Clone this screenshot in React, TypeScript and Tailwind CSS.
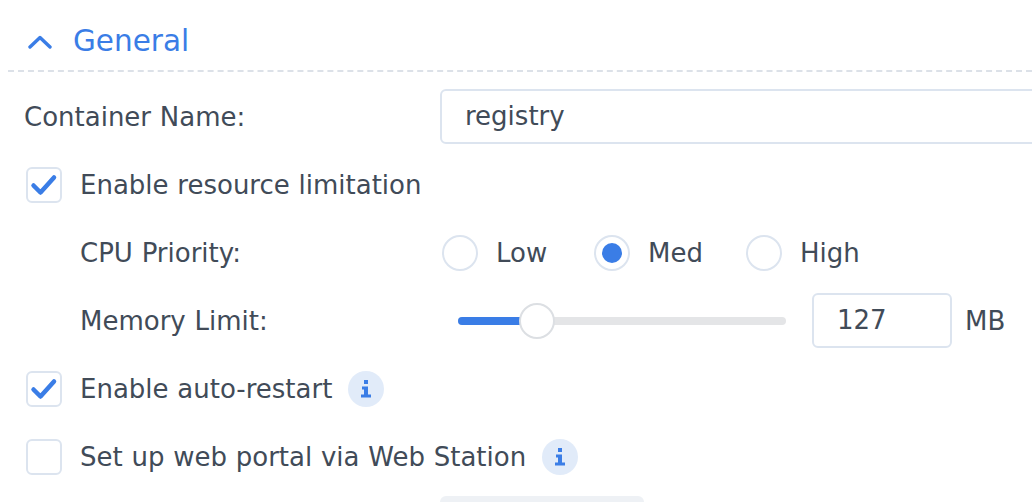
const font = "[font-family:'DejaVu_Sans',sans-serif]";

function Check({ on }: { on?: boolean }) {
  return (
    <span className="flex h-9 w-9 shrink-0 items-center justify-center rounded-md border-2 border-[#dce4ef] bg-white">
      {on && (
        <svg width="28" height="24" viewBox="0 0 28 24" fill="none">
          <path d="M3.5 12.5 L10.5 19.5 L24 4.5" stroke="#3a7de6" strokeWidth="4.5" strokeLinecap="round" strokeLinejoin="round" />
        </svg>
      )}
    </span>
  );
}

function Radio({ label, on }: { label: string; on?: boolean }) {
  return (
    <div className="flex w-[152px] items-center gap-[18px]">
      <span className="flex h-9 w-9 items-center justify-center rounded-full border-2 border-[#dce4ef] bg-white">
        {on && <span className="h-5 w-5 rounded-full bg-[#3a7de6]" />}
      </span>
      <span>{label}</span>
    </div>
  );
}

function Info() {
  return (
    <span className="-ml-[2px] flex h-9 w-9 shrink-0 items-center justify-center rounded-full bg-[#e1ebf9]">
      <svg width="12" height="18" viewBox="0 0 12 18" fill="#3a7de6">
        <rect x="4" y="0" width="4" height="4" />
        <path d="M2 6.5 H8 V14.5 H11 V17.5 H1 V14.5 H4 V9.5 H2 Z" />
      </svg>
    </span>
  );
}

function Row({ children }: { children: React.ReactNode }) {
  return <div className="flex h-[68px] shrink-0 items-center">{children}</div>;
}

export default function App() {
  return (
    <div className={`flex h-[502px] w-[1032px] flex-col overflow-hidden bg-white text-[26px] [word-spacing:0.5px] text-[#414b58] ${font}`}>
      <div className="ml-2 flex h-[72px] shrink-0 items-center gap-[21px] border-b-2 border-dashed border-[#dce1e8] pl-5 pt-[13px] text-[#3a7de6]">
        <svg width="24" height="14" viewBox="0 0 24 14" fill="none">
          <path d="M2 12 L12 2.5 L22 12" stroke="#3a7de6" strokeWidth="3.4" strokeLinecap="round" strokeLinejoin="round" />
        </svg>
        <span className="text-[29.5px]">General</span>
      </div>
      <div className="flex flex-col pt-[11px]">
        <Row>
          <span className="ml-6 w-[416px] shrink-0">Container Name:</span>
          <span className="mb-px flex h-[55px] w-[640px] shrink-0 items-center rounded-md border-2 border-[#dce4ef] pl-[23px]">registry</span>
        </Row>
        <Row>
          <div className="ml-[26px] flex items-center gap-[18px]">
            <Check on />
            <span>Enable resource limitation</span>
          </div>
        </Row>
        <Row>
          <span className="ml-20 w-[362px] shrink-0">CPU Priority:</span>
          <Radio label="Low" />
          <Radio label="Med" on />
          <Radio label="High" />
        </Row>
        <Row>
          <span className="ml-20 w-[378px] shrink-0">Memory Limit:</span>
          <div className="relative h-2 w-[328px] shrink-0 rounded-full bg-[#e4e5e7]">
            <div className="h-2 w-[66px] rounded-full bg-[#3a7de6]" />
            <span className="absolute left-[61px] top-[-14px] h-9 w-9 rounded-full border-2 border-[#dcdfe3] bg-white" />
          </div>
          <span className="mb-px ml-[26px] flex h-[55px] w-[140px] shrink-0 items-center rounded-md border-2 border-[#dce4ef] pl-[23px]">127</span>
          <span className="ml-[13px]">MB</span>
        </Row>
        <Row>
          <div className="ml-[26px] flex items-center gap-[18px]">
            <Check on />
            <span>Enable auto-restart</span>
            <Info />
          </div>
        </Row>
        <Row>
          <div className="ml-[26px] flex items-center gap-[18px]">
            <Check />
            <span>Set up web portal via Web Station</span>
            <Info />
          </div>
        </Row>
        <div className="ml-[440px] mt-[5px] h-10 w-[204px] shrink-0 rounded-md bg-[#eef1f5]" />
      </div>
    </div>
  );
}
